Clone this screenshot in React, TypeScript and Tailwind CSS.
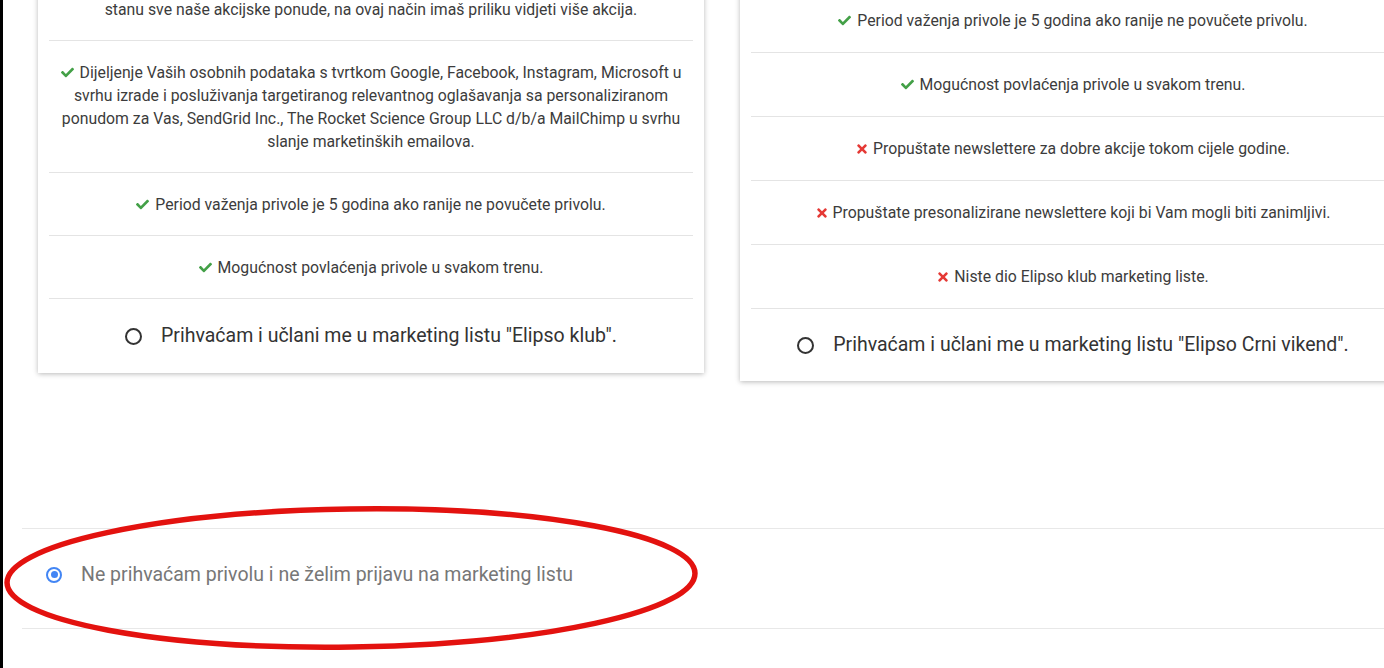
import { FaCheck, FaTimes } from "react-icons/fa"

type Row = { ok: boolean; lines: string[]; cut?: boolean }

// first rows of both cards start above the visible area; only their tails show
const leftRows: Row[] = [
  {
    ok: true,
    cut: true,
    lines: ["stanu sve naše akcijske ponude, na ovaj način imaš priliku vidjeti više akcija."],
  },
  {
    ok: true,
    lines: [
      "Dijeljenje Vaših osobnih podataka s tvrtkom Google, Facebook, Instagram, Microsoft u",
      "svrhu izrade i posluživanja targetiranog relevantnog oglašavanja sa personaliziranom",
      "ponudom za Vas, SendGrid Inc., The Rocket Science Group LLC d/b/a MailChimp u svrhu",
      "slanje marketinških emailova.",
    ],
  },
  { ok: true, lines: ["Period važenja privole je 5 godina ako ranije ne povučete privolu."] },
  { ok: true, lines: ["Mogućnost povlaćenja privole u svakom trenu."] },
]

const rightRows: Row[] = [
  { ok: true, cut: true, lines: [] },
  { ok: true, lines: ["Period važenja privole je 5 godina ako ranije ne povučete privolu."] },
  { ok: true, lines: ["Mogućnost povlaćenja privole u svakom trenu."] },
  { ok: false, lines: ["Propuštate newslettere za dobre akcije tokom cijele godine."] },
  { ok: false, lines: ["Propuštate presonalizirane newslettere koji bi Vam mogli biti zanimljivi."] },
  { ok: false, lines: ["Niste dio Elipso klub marketing liste."] },
]

function Mark({ ok }: { ok: boolean }) {
  return ok ? (
    <FaCheck className="mr-[6px] inline-block h-[13px] w-[13px] -translate-y-[1px] text-[#43a047]" />
  ) : (
    <FaTimes className="mr-[5px] inline-block h-[14px] w-[12px] -translate-y-[1px] text-[#e53935]" />
  )
}

function Card({ rows, label, tall }: { rows: Row[]; label: string; tall: boolean }) {
  return (
    <div className="w-[666px] shrink-0 bg-white px-[11px] shadow-[0_1px_5px_rgba(0,0,0,0.28)]">
      {rows.map((row, i) => (
        <div
          key={i}
          className={`border-b border-[#e4e4e4] text-center text-[15.8px] leading-[23px] text-[#3c3c3c] ${
            tall ? "py-[19.5px]" : "py-[20px]"
          }`}
        >
          {row.cut && <div className="h-[23px]" />}
          {row.lines.map((line, j) => (
            <div key={j} className="whitespace-nowrap">
              {j === 0 && !row.cut && <Mark ok={row.ok} />}
              {line}
            </div>
          ))}
        </div>
      ))}
      <div
        className={`flex items-center justify-center gap-[19px] text-[19.5px] leading-[22px] text-[#333] ${
          tall ? "py-[26px]" : "py-[25px]"
        }`}
      >
        <span className="h-[17px] w-[17px] rounded-full border-2 border-[#333]" />
        <span>{label}</span>
      </div>
    </div>
  )
}

export default function App() {
  return (
    <div className="relative h-[668px] w-[1384px] overflow-hidden border-l-[3px] border-black bg-white font-['Roboto',sans-serif]">
      <div className="flex items-start gap-[36px] pl-[35px]">
        <div className="-mt-[45px]">
          <Card rows={leftRows} label={'Prihvaćam i učlani me u marketing listu "Elipso klub".'} tall />
        </div>
        <div className="-mt-[75px]">
          <Card rows={rightRows} label={'Prihvaćam i učlani me u marketing listu "Elipso Crni vikend".'} tall={false} />
        </div>
      </div>

      <div className="ml-[19px] mt-[147px] flex h-[101px] items-center border-y border-[#e8e8e8] pb-[8px] pl-[24px]">
        <span className="flex h-[16px] w-[16px] items-center justify-center rounded-full border-2 border-[#4285f4]">
          <span className="h-[7px] w-[7px] rounded-full bg-[#4285f4]" />
        </span>
        <span className="ml-[19px] text-[19.5px] leading-[22px] text-[#777]">
          Ne prihvaćam privolu i ne želim prijavu na marketing listu
        </span>
      </div>

      {/* red hand-drawn annotation */}
      <svg
        className="pointer-events-none absolute left-0 top-[498px]"
        width="720"
        height="170"
        viewBox="0 0 720 170"
      >
        <ellipse
          cx="348"
          cy="80"
          rx="344"
          ry="69"
          fill="none"
          stroke="#e3120f"
          strokeWidth="5.5"
          transform="rotate(-0.8 348 80)"
        />
      </svg>
    </div>
  )
}
